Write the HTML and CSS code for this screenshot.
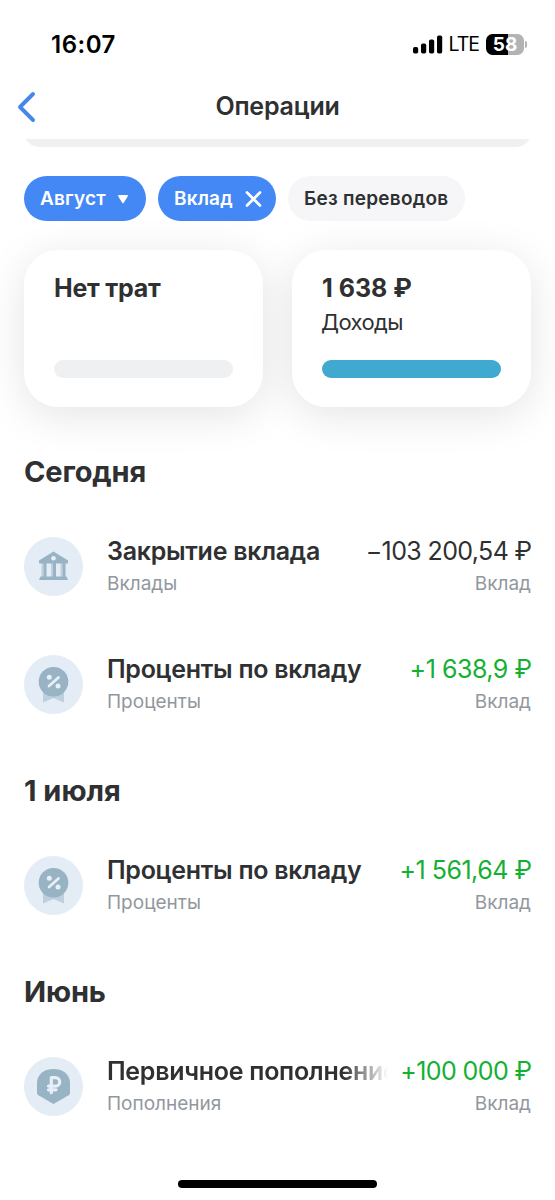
FILE: index.html
```html
<!DOCTYPE html>
<html lang="ru">
<head>
<meta charset="utf-8">
<title>Операции</title>
<link rel="stylesheet" href="styles.css">
</head>
<body>
<svg class="defs" width="0" height="0">
  <symbol id="percent" viewBox="0 0 59 59">
    <path d="M19 37h21v10.500l-10.500-4.500-10.500 4.500z" fill="#bdd0de"/>
    <circle cx="29.500" cy="26.700" r="14.800" fill="#98b3c4"/>
    <path d="M25 31l9.500-8.500" stroke="#e8eff7" stroke-width="2.700" stroke-linecap="round"/>
    <circle cx="25.300" cy="22.300" r="2.500" fill="#e8eff7"/>
    <circle cx="34" cy="31" r="2.500" fill="#e8eff7"/>
  </symbol>
</svg>
<div class="screen">
  <header class="status">
    <span class="time">16:07</span>
    <div class="indicators">
      <svg class="signal" width="30" height="19" viewBox="0 0 30 19">
        <rect x="0" y="12" width="5.200" height="6.500" rx="1.800"/>
        <rect x="8" y="8.500" width="5.200" height="10" rx="1.800"/>
        <rect x="16" y="4.500" width="5.200" height="14" rx="1.800"/>
        <rect x="24" y="0.500" width="5.200" height="18" rx="1.800"/>
      </svg>
      <span class="network">LTE</span>
      <span class="battery">58</span>
      <span class="battery-cap"></span>
    </div>
  </header>
  <nav class="nav">
    <svg class="back" width="20" height="32" viewBox="0 0 20 32"><path d="M16 3L3 16l13 13" fill="none" stroke="#4688e8" stroke-width="3.900" stroke-linecap="round" stroke-linejoin="round"/></svg>
    <h1 class="title">Операции</h1>
  </nav>
  <div class="search"><div class="search-field"></div></div>
  <div class="chips">
    <div class="chip chip-active chip-month"><span>Август</span><svg width="12" height="11" viewBox="0 0 12 11"><path d="M1.800 2.800h8.400L6 9.500z" fill="#fff" stroke="#fff" stroke-width="1.500" stroke-linejoin="round"/></svg></div>
    <div class="chip chip-active chip-deposit"><span>Вклад</span><svg width="17" height="17" viewBox="0 0 17 17"><path d="M2 2.500l13 13M15 2.500L2 15.500" stroke="#fff" stroke-width="2.700" stroke-linecap="round"/></svg></div>
    <div class="chip chip-plain"><span>Без переводов</span></div>
  </div>
  <div class="cards">
    <div class="card"><b class="card-title">Нет трат</b><div class="bar"></div></div>
    <div class="card"><b class="card-title sum">1 638 ₽</b><span class="card-sub">Доходы</span><div class="bar bar-income"></div></div>
  </div>
  <section class="group">
    <h2 class="heading">Сегодня</h2>
    <div class="row">
      <div class="icon"><svg width="59" height="59" viewBox="0 0 59 59">
        <path d="M18.500 26v14M28 26v14M37.500 26v14" stroke="#bdd0de" stroke-width="2"/>
        <path d="M21 26v14M30.500 26v14M40 26v14" stroke="#98b3c4" stroke-width="3"/>
        <path d="M29.500 14.500L44 23.500V26.500H15V23.500z" fill="#98b3c4"/>
        <circle cx="29.500" cy="21.300" r="2.300" fill="#e8eff7"/>
        <path d="M16.500 39.500h26l1.500 3.500H15z" fill="#98b3c4"/>
      </svg></div>
      <div class="info"><span class="name">Закрытие вклада</span><span class="note">Вклады</span></div>
      <div class="value"><span class="amount">−103 200,54 ₽</span><span class="note">Вклад</span></div>
    </div>
    <div class="row">
      <div class="icon"><svg width="59" height="59"><use href="#percent"/></svg></div>
      <div class="info"><span class="name">Проценты по вкладу</span><span class="note">Проценты</span></div>
      <div class="value"><span class="amount plus">+1 638,9 ₽</span><span class="note">Вклад</span></div>
    </div>
  </section>
  <section class="group">
    <h2 class="heading heading-date">1 июля</h2>
    <div class="row">
      <div class="icon"><svg width="59" height="59"><use href="#percent"/></svg></div>
      <div class="info"><span class="name">Проценты по вкладу</span><span class="note">Проценты</span></div>
      <div class="value"><span class="amount plus">+1 561,64 ₽</span><span class="note">Вклад</span></div>
    </div>
  </section>
  <section class="group">
    <h2 class="heading">Июнь</h2>
    <div class="row">
      <div class="icon"><svg width="59" height="59" viewBox="0 0 59 59">
        <path d="M13 25C14 16 21 12 29.500 12s15.500 4 16.500 13V36c0 1-.5 1.700-1.500 2.300L29.500 47 14.500 38.300c-1-.6-1.500-1.300-1.500-2.300z" fill="#98b3c4"/>
        <path d="M27.300 35.700V20.700h4.200a4.200 4.200 0 0 1 0 8.400H24.500M24.500 32.800h7.500" fill="none" stroke="#e8eff7" stroke-width="3.200" stroke-linecap="round" stroke-linejoin="round"/>
      </svg></div>
      <div class="info"><span class="name name-long">Первичное пополнение</span><span class="note">Пополнения</span></div>
      <div class="value"><span class="amount plus plus-whole">+100 000 ₽</span><span class="note">Вклад</span></div>
    </div>
  </section>
  <div class="home"></div>
</div>
</body>
</html>
```
FILE: styles.css
```css
* { box-sizing: border-box; }
body { margin: 0; background: #fff; font-family: Inter, "Liberation Sans", sans-serif; color: #2f3032; }
.defs { display: block; }
.screen { width: 555px; height: 1200px; overflow: hidden; display: flex; flex-direction: column; }
.status { height: 74px; padding: 14px 28px 0 51px; display: flex; align-items: center; justify-content: space-between; color: #000; }
.time { font-size: 24px; font-weight: 600; letter-spacing: 0.5px; }
.indicators { display: flex; align-items: center; }
.network { font-size: 19.500px; line-height: 20px; margin-left: 6px; letter-spacing: -1px; }
.battery { width: 38px; height: 21px; margin-left: 7px; border-radius: 6.500px; background: linear-gradient(90deg, #000 57%, #b3b3b3 57%); color: #fff; font-weight: 700; font-size: 19px; line-height: 21px; text-align: center; }
.battery-cap { width: 2px; height: 7px; margin-left: 1px; border-radius: 0 3px 3px 0; background: #b3b3b3; }
.nav { height: 65px; display: grid; grid-template-columns: 60px 1fr 60px; align-items: center; }
.back { margin-left: 17px; }
.title { margin: -2px 0 0; text-align: center; font-size: 25px; font-weight: 600; letter-spacing: -0.2px; }
.search { height: 8px; margin: 0 24px; overflow: hidden; display: flex; align-items: flex-end; }
.search-field { flex: 1; height: 52px; border-radius: 15px; background: #eff0f2; }
.chips { display: flex; gap: 12px; margin: 29px 24px 0; }
.chip { height: 45px; border-radius: 23px; display: flex; align-items: center; font-size: 19px; font-weight: 600; padding-left: 16px; white-space: nowrap; letter-spacing: 0.15px; }
.chip-active { background: #4488f5; color: #fff; justify-content: space-between; }
.chip-month { width: 122px; padding-right: 17px; }
.chip-deposit { width: 118px; padding-right: 14px; }
.chip-plain { width: 177px; background: #f6f6f9; letter-spacing: 0.25px; }
.cards { display: grid; grid-template-columns: 1fr 1fr; gap: 29px; margin: 29px 24px 0; }
.card { height: 157px; border-radius: 34px; background: #fff; box-shadow: 0 8px 44px rgba(0,0,0,.11); padding: 22px 30px 29px; display: flex; flex-direction: column; }
.card-title { font-size: 25px; line-height: 32px; font-weight: 700; letter-spacing: -0.25px; }
.sum { letter-spacing: 0; }
.card-sub { font-size: 22px; line-height: 28px; margin: 4px 0 0 -1px; letter-spacing: -0.6px; }
.bar { height: 18px; margin-top: auto; border-radius: 9px; background: #eff0f2; }
.bar-income { background: #3fa9cf; }
.group { padding: 0 24px; }
.group:first-of-type { margin-top: 47px; }
.heading { margin: 0; height: 36px; line-height: 36px; font-size: 29px; font-weight: 700; letter-spacing: -0.15px; }
.heading-date { letter-spacing: 0; }
.row { height: 59px; margin: 47px 0 59px; display: flex; }
.row + .row { margin-top: 59px; }
.icon { width: 59px; height: 59px; border-radius: 50%; background: #e4ecf5; flex: none; }
.icon svg { display: block; }
.info { flex: 1; min-width: 0; padding-left: 24px; display: flex; flex-direction: column; }
.value { flex: none; display: flex; flex-direction: column; align-items: flex-end; margin-left: 12px; }
.name { font-size: 25px; line-height: 29px; font-weight: 600; white-space: nowrap; letter-spacing: -0.28px; }
.name-long { overflow: hidden; mask-image: linear-gradient(90deg, #000 calc(100% - 45px), transparent); }
.amount { font-size: 25px; line-height: 29px; white-space: nowrap; letter-spacing: -0.62px; margin-right: -0.5px; }
.plus { color: #14b032; letter-spacing: -0.48px; }
.plus-whole { letter-spacing: -0.6px; }
.note { font-size: 19px; line-height: 24px; margin-top: 6px; color: #92979e; }
.home { position: absolute; left: 178px; top: 1180px; width: 199px; height: 8px; border-radius: 4px; background: #000; }
```
